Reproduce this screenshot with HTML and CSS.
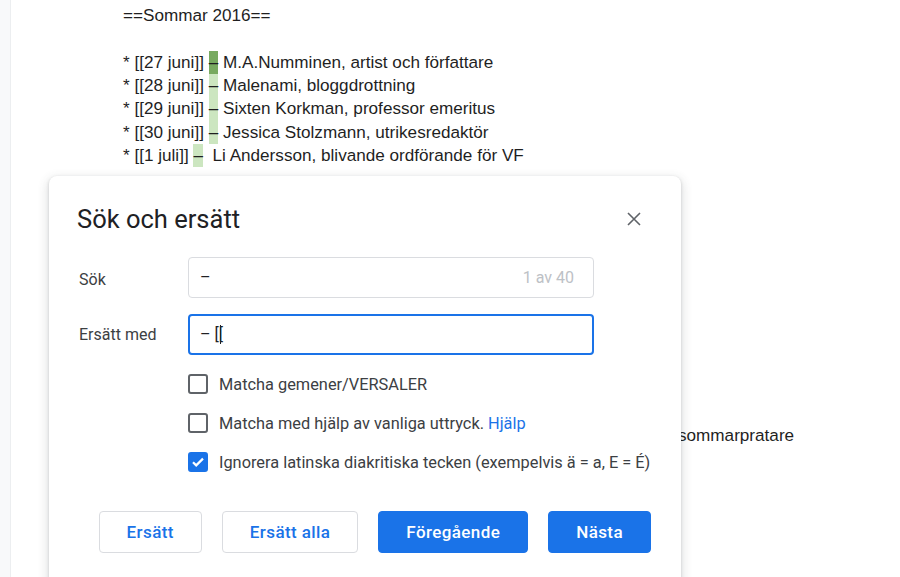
FILE: index.html
```html
<!DOCTYPE html>
<html lang="sv">
<head>
<meta charset="utf-8">
<title>Sök och ersätt</title>
<link rel="stylesheet" href="styles.css">
</head>
<body>
<div class="app">
  <div class="rail"></div>
  <div class="doc">
    <p class="line">==Sommar 2016==</p>
    <p class="line"></p>
    <p class="line">* [[27 juni]] <span class="hit current">–</span> M.A.Numminen, artist och författare</p>
    <p class="line">* [[28 juni]] <span class="hit">–</span> Malenami, bloggdrottning</p>
    <p class="line">* [[29 juni]] <span class="hit">–</span> Sixten Korkman, professor emeritus</p>
    <p class="line">* [[30 juni]] <span class="hit">–</span> Jessica Stolzmann, utrikesredaktör</p>
    <p class="line">* [[1 juli]] <span class="hit">–</span>&nbsp; Li Andersson, blivande ordförande för VF</p>
    <div class="gap"></div>
    <p class="line"><span class="tail">sommarpratare</span></p>
  </div>
</div>

<div class="dialog">
  <div class="head">
    <h1 class="title">Sök och ersätt</h1>
    <span class="close">
      <svg width="14" height="14" viewBox="0 0 14 14"><path d="M1 1L13 13M13 1L1 13" stroke="#5f6368" stroke-width="1.6" fill="none"/></svg>
    </span>
  </div>
  <div class="row">
    <span class="label first">Sök</span>
    <div class="field"><span class="value">–</span><span class="count">1 av 40</span></div>
  </div>
  <div class="row second">
    <span class="label">Ersätt med</span>
    <div class="field focus"><span class="value">– [[</span><span class="caret"></span></div>
  </div>
  <div class="options">
    <div class="option"><span class="box"></span><span class="opt-text">Matcha gemener/VERSALER</span></div>
    <div class="option"><span class="box"></span><span class="opt-text">Matcha med hjälp av vanliga uttryck. <span class="link">Hjälp</span></span></div>
    <div class="option"><span class="box checked"><svg width="16" height="16" viewBox="0 0 16 16"><path d="M3 8.2l3.2 3.2L13 4.6" stroke="#fff" stroke-width="2.2" fill="none"/></svg></span><span class="opt-text">Ignorera latinska diakritiska tecken (exempelvis ä = a, E = É)</span></div>
  </div>
  <div class="actions">
    <button class="btn">Ersätt</button>
    <button class="btn">Ersätt alla</button>
    <button class="btn primary">Föregående</button>
    <button class="btn primary">Nästa</button>
  </div>
</div>
</body>
</html>
```

FILE: styles.css
```css
html, body {
  margin: 0;
  padding: 0;
  background: #fff;
  height: 577px;
  overflow: hidden;
}

.app {
  display: flex;
  height: 577px;
}

.rail {
  width: 10px;
  flex: none;
  background: #f8f9fa;
  border-right: 1px solid #eceef0;
}

.doc {
  flex: 1;
  padding: 4px 0 0 112px;
  font-family: "Liberation Sans", Arial, sans-serif;
  font-size: 17.14px;
  color: #1f1f1f;
}

.line {
  margin: 0;
  height: 23.33px;
  line-height: 23.33px;
  white-space: nowrap;
}

.gap {
  height: calc(23.33px * 11);
}

.tail {
  padding-left: 555px;
}

.hit {
  display: inline-block;
  height: 23.33px;
  vertical-align: top;
  background: #cce6c0;
}

.hit.current {
  background: #78aa60;
}

.dialog {
  position: absolute;
  left: 49px;
  top: 176px;
  width: 632px;
  height: 430px;
  box-sizing: border-box;
  background: #fff;
  border-radius: 8px;
  box-shadow: 0 4px 10px 3px rgba(60, 64, 67, 0.12), 0 1px 3px rgba(60, 64, 67, 0.22);
  padding: 27px 30px 0 28px;
  font-family: Roboto, "Noto Sans", sans-serif;
  color: #3c4043;
}

.head {
  display: flex;
  justify-content: space-between;
  align-items: center;
  height: 32px;
  margin-bottom: 22px;
}

.title {
  margin: 0;
  font-size: 25.5px;
  font-weight: 400;
  color: #202124;
  line-height: 32px;
}

.close {
  display: flex;
  align-items: center;
  justify-content: center;
  width: 24px;
  height: 24px;
  margin-right: 5px;
}

.row {
  display: flex;
  align-items: center;
}

.row.second {
  margin-top: 16px;
}

.label {
  width: 111px;
  flex: none;
  font-size: 16px;
  padding-left: 2px;
  box-sizing: border-box;
}

.label.first {
  padding-top: 4px;
}

.field {
  width: 406px;
  height: 41px;
  box-sizing: border-box;
  border: 1px solid #dadce0;
  border-radius: 4px;
  display: flex;
  align-items: center;
  padding: 0 19px 0 11px;
  font-size: 16px;
  color: #202124;
}

.field.focus {
  border: 2px solid #1a73e8;
  padding-left: 10px;
}

.value {
  white-space: pre;
}

.count {
  margin-left: auto;
  color: #bdc1c6;
}

.caret {
  width: 1px;
  height: 19px;
  background: #202124;
  margin-left: -3px;
}

.options {
  margin: 19px 0 0 111px;
  display: flex;
  flex-direction: column;
  gap: 19px;
}

.option {
  display: flex;
  align-items: center;
  height: 20px;
  font-size: 16.35px;
  color: #3c4043;
}

.box {
  width: 20px;
  height: 20px;
  box-sizing: border-box;
  border: 2px solid #5f6368;
  border-radius: 3px;
  flex: none;
  display: flex;
  align-items: center;
  justify-content: center;
}

.box.checked {
  background: #1a73e8;
  border-color: #1a73e8;
}

.opt-text {
  margin-left: 11px;
}

.link {
  color: #1a73e8;
}

.actions {
  margin-top: 39px;
  display: flex;
  justify-content: flex-end;
  gap: 20px;
}

.btn {
  height: 42px;
  padding: 0 27px;
  border: 1px solid #dadce0;
  border-radius: 4px;
  background: #fff;
  color: #1a73e8;
  font-family: Roboto, "Noto Sans", sans-serif;
  font-size: 17px;
  font-weight: 500;
  letter-spacing: 0.4px;
}

.btn.primary {
  background: #1a73e8;
  border-color: #1a73e8;
  color: #fff;
}
```
